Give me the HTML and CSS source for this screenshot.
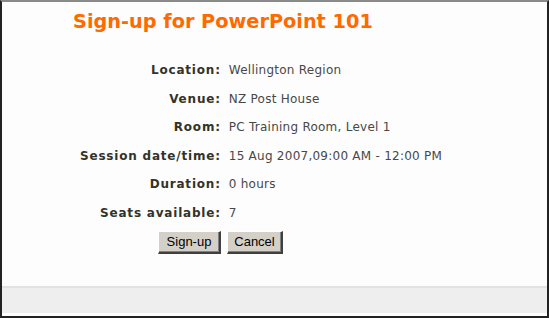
FILE: index.html
```html
<!DOCTYPE html>
<html lang="en">
<head>
    <meta charset="UTF-8">
    <title>Sign-up for PowerPoint 101</title>
    <link rel="stylesheet" href="styles.css">
</head>
<body>
<div class="frame">
    <div class="main">
        <h1 class="title">Sign-up for PowerPoint 101</h1>
        <div class="details">
            <div class="label">Location:</div>
            <div class="value">Wellington Region</div>
            <div class="label">Venue:</div>
            <div class="value">NZ Post House</div>
            <div class="label">Room:</div>
            <div class="value">PC Training Room, Level 1</div>
            <div class="label">Session date/time:</div>
            <div class="value">15 Aug 2007,09:00 AM - 12:00 PM</div>
            <div class="label">Duration:</div>
            <div class="value">0 hours</div>
            <div class="label">Seats available:</div>
            <div class="value">7</div>
            <div class="buttons">
                <button class="btn btn-signup" type="button">Sign-up</button>
                <button class="btn btn-cancel" type="button">Cancel</button>
            </div>
        </div>
    </div>
    <div class="footer"></div>
</div>
</body>
</html>
```

FILE: styles.css
```css
html, body {
    margin: 0;
    padding: 0;
    background: #ffffff;
}

.frame {
    box-sizing: border-box;
    width: 549px;
    height: 318px;
    border-top: 2px solid #8a8a8a;
    border-left: 2px solid #222222;
    border-right: 2px solid #222222;
    border-bottom: 2px solid #222222;
    padding-bottom: 3px;
    display: flex;
    flex-direction: column;
    background: #fdfdfd;
}

.main {
    flex: 1;
    padding: 8px 0 0 71px;
}

.title {
    margin: 0;
    font-family: "DejaVu Sans", Verdana, sans-serif;
    font-size: 19.3px;
    line-height: 24px;
    font-weight: bold;
    color: #ff6a00;
}

.details {
    display: grid;
    grid-template-columns: max-content max-content;
    grid-auto-rows: 28.6px;
    column-gap: 8px;
    margin: 22px 0 0 7px;
    width: max-content;
    font-family: "DejaVu Sans", Verdana, sans-serif;
    font-size: 12px;
}

.label {
    text-align: right;
    font-weight: bold;
    letter-spacing: 0.8px;
    color: #333328;
    line-height: 28.6px;
}

.value {
    color: #484848;
    letter-spacing: 0.25px;
    line-height: 28.6px;
}

.buttons {
    grid-column: 1 / 3;
    display: flex;
    gap: 6px;
    padding: 3px 0 0 78px;
}

.btn {
    box-sizing: border-box;
    height: 23px;
    padding: 0;
    font-family: "Liberation Sans", Arial, sans-serif;
    font-size: 13px;
    color: #000000;
    background: #d4d0c8;
    border-style: solid;
    border-width: 1px 2px 2px 1px;
    border-color: #ffffff #404040 #404040 #ffffff;
    box-shadow: inset -1px -1px 0 #808080;
}

.btn-signup {
    width: 63px;
}

.btn-cancel {
    width: 56px;
}

.footer {
    height: 25px;
    background: #eeeeee;
    border-top: 2px solid #e2e2e2;
}
```
